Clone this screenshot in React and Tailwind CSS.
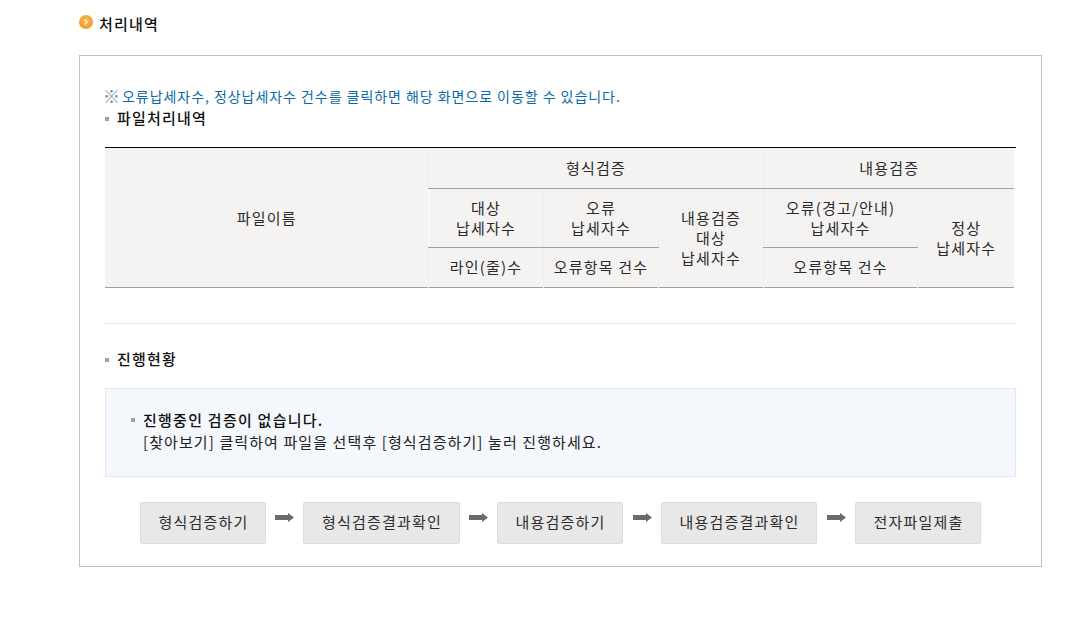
const font = { fontFamily: '"Noto Sans CJK KR", "Noto Sans", sans-serif' };

function Bullet({ className = "" }) {
  return <span className={"inline-block w-[4px] h-[4px] bg-[#a0a0a0] shrink-0 " + className} />;
}

function SubTitle({ children, className = "" }) {
  return (
    <div className={"flex items-center gap-[8px] text-[15px] leading-[20px] font-medium tracking-[1.2px] text-[#111] " + className}>
      <Bullet className="mt-[2px]" />
      <span>{children}</span>
    </div>
  );
}

function Arrow({ left }) {
  return (
    <svg width="19" height="9" viewBox="0 0 19 9" className={"mt-[-10px] mr-[9px] shrink-0 " + left}>
      <path d="M0 2h13V0l6 4.5-6 4.5V7H0z" fill="#6b6b6b" />
    </svg>
  );
}

function StepButton({ children, w }) {
  return (
    <div
      className={"h-[42px] flex items-center justify-center bg-[#e8e8e8] border border-[#dcdcdc] rounded-[2px] text-[15px] tracking-[1.2px] pl-[1px] text-[#2c2c2c] " + w}
    >
      {children}
    </div>
  );
}

const th = "font-normal text-[15px] leading-[20px] tracking-[1.2px] text-[#2a2a2a] text-center align-middle py-0 pl-[1px] pr-0 bg-[#f4f3f2]";
const lineV = " border-l border-l-[#eeedec]";
const lineB = " border-b border-b-[#a0a0a0]";

export default function App() {
  return (
    <div style={font} className="w-[1073px] h-[620px] bg-white overflow-hidden pl-[79px]">
      <div className="flex items-center h-[55px] pb-[6px]">
        <span className="w-[14px] h-[14px] rounded-full bg-[radial-gradient(circle_at_50%_40%,#fbb957,#ef8f1c)] mt-[-6px] flex items-center justify-center shrink-0">
          <svg width="8" height="8" viewBox="0 0 8 8">
            <path d="M2.8 1.5 5.2 4 2.8 6.5" stroke="#fff3dc" strokeWidth="1.4" fill="none" />
          </svg>
        </span>
        <span className="ml-[6px] text-[15px] font-medium tracking-[1.2px] text-[#111]">처리내역</span>
      </div>

      <div className="w-[963px] h-[512px] border border-[#c0c0c0] px-[25px] pt-[30px]">
        <p className="ml-[-2px] flex items-center h-[20px] text-[14px] leading-[20px] tracking-[0.95px] text-[#0b6aa2]">
          <span className="w-[19px] shrink-0 text-[17px] leading-[20px] tracking-normal text-[#6f8fb0]">※</span>
          <span>오류납세자수, 정상납세자수 건수를 클릭하면 해당 화면으로 이동할 수 있습니다.</span>
        </p>
        <SubTitle className="mt-[2px]">파일처리내역</SubTitle>

        <div className="mt-[19px] w-[911px] border-t border-black">
          <table className="w-[909px] border-collapse table-fixed border-b border-[#a0a0a0]">
            <colgroup>
              <col className="w-[323px]" />
              <col className="w-[115px]" />
              <col className="w-[115px]" />
              <col className="w-[105px]" />
              <col className="w-[154px]" />
              <col className="w-[97px]" />
            </colgroup>
            <tbody>
              <tr className="h-[40px]">
                <th rowSpan={3} className={th + " pt-[1px]"}>파일이름</th>
                <th colSpan={3} className={th + lineV + lineB + " pt-[1px]"}>형식검증</th>
                <th colSpan={2} className={th + lineV + lineB + " pt-[1px]"}>내용검증</th>
              </tr>
              <tr className="h-[59px]">
                <th className={th + " border-l border-l-white" + lineB}>대상<br />납세자수</th>
                <th className={th + lineV + lineB}>오류<br />납세자수</th>
                <th rowSpan={2} className={th + lineV}>내용검증<br />대상<br />납세자수</th>
                <th className={th + lineV + lineB}>오류(경고/안내)<br />납세자수</th>
                <th rowSpan={2} className={th + lineV}>정상<br />납세자수</th>
              </tr>
              <tr className="h-[40px]">
                <th className={th + lineV}>라인(줄)수</th>
                <th className={th + lineV}>오류항목 건수</th>
                <th className={th + lineV}>오류항목 건수</th>
              </tr>
            </tbody>
          </table>
        </div>

        <div className="mt-[35px] w-[911px] border-t border-[#e5e5e5]" />
        <SubTitle className="mt-[25px]">진행현황</SubTitle>

        <div className="mt-[19px] w-[911px] h-[89px] bg-[#f4f7fb] border border-[#e1e8f0] pl-[25px] pt-[20px] text-[15px] leading-[22px] tracking-[1.1px] text-[#222]">
          <div className="flex items-center gap-[8px] font-medium tracking-[1.25px] text-[#111]">
            <Bullet className="mt-[1px]" />
            <span>진행중인 검증이 없습니다.</span>
          </div>
          <div className="pl-[12px]">[찾아보기] 클릭하여 파일을 선택후 [형식검증하기] 눌러 진행하세요.</div>
        </div>

        <div className="mt-[25px] flex items-center pl-[35px]">
          <StepButton w="w-[126px]">형식검증하기</StepButton>
          <Arrow left="ml-[9px]" />
          <StepButton w="w-[157px]">형식검증결과확인</StepButton>
          <Arrow left="ml-[9px]" />
          <StepButton w="w-[126px]">내용검증하기</StepButton>
          <Arrow left="ml-[10px]" />
          <StepButton w="w-[156px]">내용검증결과확인</StepButton>
          <Arrow left="ml-[10px]" />
          <StepButton w="w-[126px]">전자파일제출</StepButton>
        </div>
      </div>
    </div>
  );
}
